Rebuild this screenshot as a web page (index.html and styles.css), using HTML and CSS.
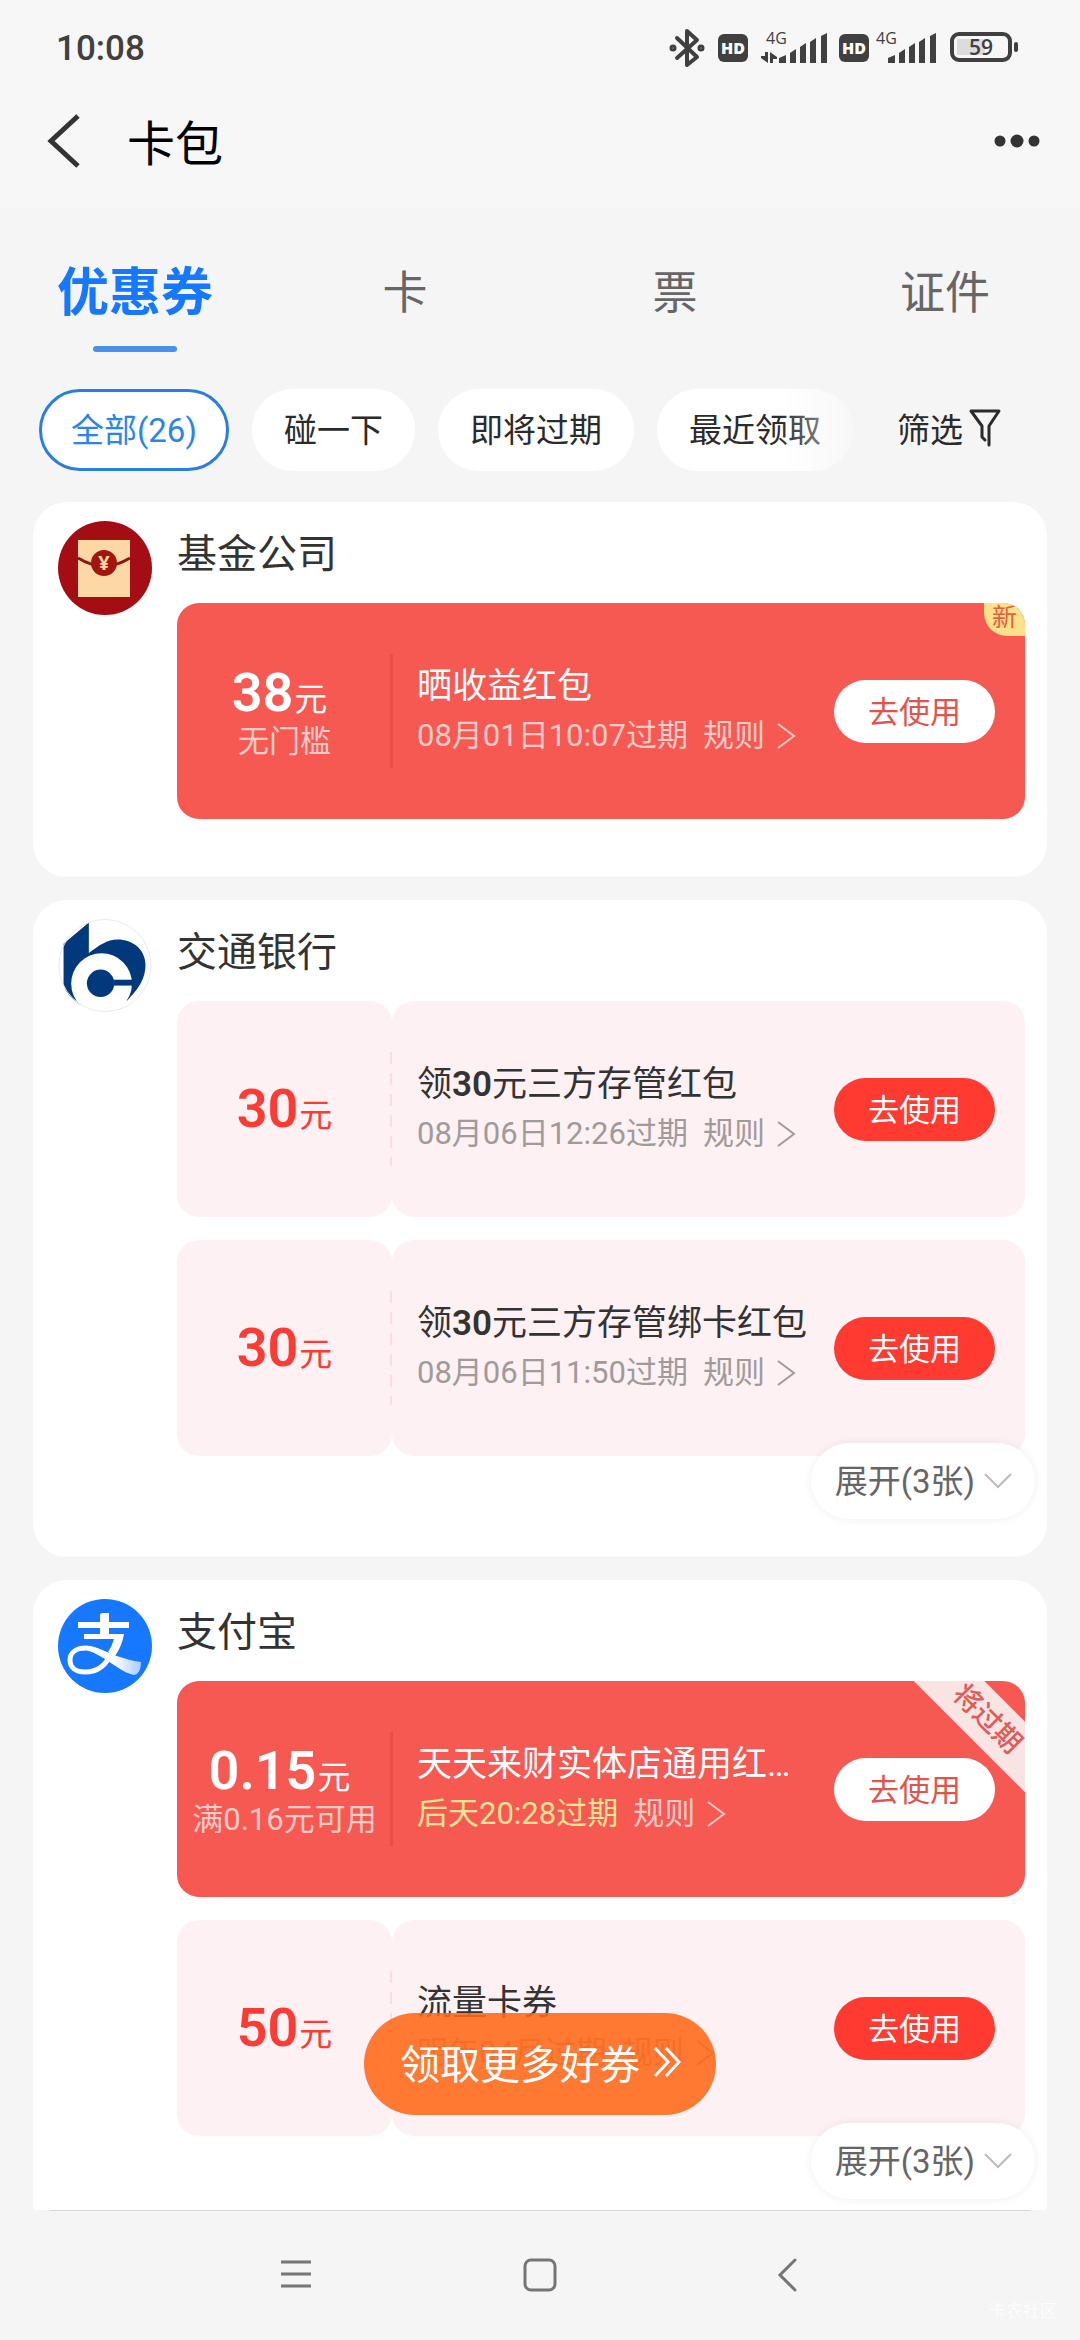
FILE: index.html
```html
<!DOCTYPE html>
<html lang="zh-CN">
<head>
<meta charset="utf-8">
<meta name="viewport" content="width=device-width">
<title>卡包</title>
<link rel="stylesheet" href="styles.css">
</head>
<body>
<svg class="defs" aria-hidden="true">
  <symbol id="signal" viewBox="0 0 48 30">
    <path d="M0 30V25L7 22V30ZM11 30V20L17 16V30ZM21 30V14L27 10V30ZM31 30V9L37 5V30ZM42 30V3L48 0V30Z" fill="#404040"/>
  </symbol>
  <symbol id="chev-right" viewBox="0 0 20 30">
    <path d="M2 3L18 15L2 27" fill="none" stroke="currentColor" stroke-width="2"/>
  </symbol>
  <symbol id="chev-down" viewBox="0 0 30 18">
    <path d="M2 2L15 15L28 2" fill="none" stroke="currentColor" stroke-width="2"/>
  </symbol>
</svg>
<div class="app">
  <header class="header">
    <div class="status">
      <span class="clock">10:08</span>
      <div class="status-icons">
        <svg class="bt" width="36" height="40" viewBox="0 0 36 40" fill="none" stroke="#404040" stroke-width="4" stroke-linejoin="round" stroke-linecap="round">
          <path d="M8 10L28 29L18 37V3L28 12L8 30"/>
          <circle cx="4" cy="20" r="1.500"/><circle cx="32" cy="20" r="1.500"/>
        </svg>
        <span class="hd">HD</span>
        <span class="net net-data"><span class="gen">4G</span>
          <svg class="arrows" width="16" height="11" viewBox="0 0 16 11" fill="#404040"><path d="M4 0H7V11L0 6V4H4ZM9 11V0L16 5V7H12V11Z"/></svg>
          <svg class="bars" width="48" height="30"><use href="#signal"/></svg>
        </span>
        <span class="hd">HD</span>
        <span class="net"><span class="gen">4G</span>
          <svg class="bars" width="48" height="30"><use href="#signal"/></svg>
        </span>
        <span class="battery"><span class="level">59</span></span>
      </div>
    </div>
    <div class="titlebar">
      <button class="icon-btn" aria-label="返回"><svg width="34" height="54" viewBox="0 0 34 54"><path d="M31 2L4 27L31 52" fill="none" stroke="#333" stroke-width="5"/></svg></button>
      <h1>卡包</h1>
      <button class="icon-btn more" aria-label="更多"><svg width="48" height="16" viewBox="0 0 48 16" fill="#333"><circle cx="7" cy="8" r="5.500"/><circle cx="24" cy="8" r="6.500"/><circle cx="41" cy="8" r="5.500"/></svg></button>
    </div>
  </header>

  <nav class="tabs">
    <a href="#coupons" class="tab active">优惠券</a>
    <a href="#cards" class="tab">卡</a>
    <a href="#tickets" class="tab">票</a>
    <a href="#ids" class="tab">证件</a>
  </nav>

  <div class="filters">
    <div class="chips">
      <button class="chip on">全部(26)</button>
      <button class="chip">碰一下</button>
      <button class="chip">即将过期</button>
      <button class="chip">最近领取</button>
    </div>
    <button class="filter-btn">筛选<svg width="34" height="38" viewBox="0 0 34 38" fill="none" stroke="#2b2b2b" stroke-width="3" stroke-linejoin="round" stroke-linecap="round"><path d="M21 36V17L31 2H3L14 17V28L17 31"/></svg></button>
  </div>

  <main class="list">
    <section class="card">
      <svg class="logo" viewBox="0 0 96 96">
        <circle cx="48" cy="48" r="47" fill="#a50d14"/>
        <path d="M21 20H73V77H21Z" fill="#fbd8a6"/>
        <path d="M21 38Q34 46 47 46Q60 46 73 38" fill="none" stroke="#8f1712" stroke-width="3"/>
        <circle cx="47" cy="43" r="13" fill="#a3150f"/>
        <text x="47" y="50" text-anchor="middle" class="yen">¥</text>
      </svg>
      <div class="body">
        <h2>基金公司</h2>
        <div class="coupons">
          <article class="coupon red">
            <div class="stub"><p class="price"><b>38</b>元</p><p class="cond">无门槛</p></div>
            <div class="info">
              <div class="text"><h3>晒收益红包</h3><p class="meta"><span>08月01日10:07过期</span><a href="#rule">规则<svg width="20" height="30"><use href="#chev-right"/></svg></a></p></div>
              <button class="use">去使用</button>
            </div>
            <span class="new">新</span>
          </article>
        </div>
      </div>
    </section>

    <section class="card">
      <svg class="logo" viewBox="0 0 96 98">
        <path d="M31.500 4.700L5.700 26.300V68Q8 79 24 89.700L44 67L70.400 84.700C77 77 89.300 66 89.300 48C89.300 32 76 22 61 22C50 22 42 28 31.500 35.700Z" fill="#02397d"/>
        <circle cx="44.500" cy="67" r="31" fill="#fff"/>
        <circle cx="43.500" cy="66.700" r="14" fill="#02397d"/>
        <path d="M50 63H76V69H50Z" fill="#02397d"/>
        <circle cx="48" cy="48.500" r="47" fill="none" stroke="#eaeaee"/>
      </svg>
      <div class="body">
        <h2>交通银行</h2>
        <div class="coupons">
          <article class="coupon">
            <div class="stub"><p class="price"><b>30</b>元</p></div>
            <div class="info">
              <div class="text"><h3>领<b>30</b>元三方存管红包</h3><p class="meta"><span>08月06日12:26过期</span><a href="#rule">规则<svg width="20" height="30"><use href="#chev-right"/></svg></a></p></div>
              <button class="use">去使用</button>
            </div>
          </article>
          <article class="coupon">
            <div class="stub"><p class="price"><b>30</b>元</p></div>
            <div class="info">
              <div class="text"><h3>领<b>30</b>元三方存管绑卡红包</h3><p class="meta"><span>08月06日11:50过期</span><a href="#rule">规则<svg width="20" height="30"><use href="#chev-right"/></svg></a></p></div>
              <button class="use">去使用</button>
            </div>
          </article>
        </div>
        <button class="expand">展开(3张)<svg width="30" height="18"><use href="#chev-down"/></svg></button>
      </div>
    </section>

    <section class="card">
      <svg class="logo" viewBox="0 0 96 96">
        <defs><linearGradient id="tail" x1="0.500" x2="1"><stop offset="0" stop-color="#fff"/><stop offset="1" stop-color="#a9cbff"/></linearGradient></defs>
        <circle cx="48" cy="48" r="47" fill="#1678ff"/>
        <path d="M43 17Q43 15 46 15H52V24H72V30H52V36H67Q65 48 58 58L51 54Q55 48 57 41H27V36H43V30H21V24H43Z" fill="#fff"/>
        <path d="M55 54C50 66 41 74 28 74C18 74 13 69 13 62C13 54 20 50 29 50C36 50 44 54 52 58" fill="none" stroke="#fff" stroke-width="5"/>
        <path d="M30 48C42 48 56 60 84 64Q84 76 77 77C62 74 50 59 30 52Z" fill="url(#tail)"/>
      </svg>
      <div class="body">
        <h2>支付宝</h2>
        <div class="coupons">
          <article class="coupon red">
            <div class="stub"><p class="price"><b>0.15</b>元</p><p class="cond">满0.16元可用</p></div>
            <div class="info">
              <div class="text"><h3>天天来财实体店通用红…</h3><p class="meta"><span class="soon">后天20:28过期</span><a href="#rule">规则<svg width="20" height="30"><use href="#chev-right"/></svg></a></p></div>
              <button class="use">去使用</button>
            </div>
            <span class="ribbon">将过期</span>
          </article>
          <article class="coupon">
            <div class="stub"><p class="price"><b>50</b>元</p></div>
            <div class="info">
              <div class="text"><h3>流量卡券</h3><p class="meta"><span>明年04月过期</span><a href="#rule">规则<svg width="20" height="30"><use href="#chev-right"/></svg></a></p></div>
              <button class="use">去使用</button>
            </div>
          </article>
        </div>
        <button class="expand">展开(3张)<svg width="30" height="18"><use href="#chev-down"/></svg></button>
      </div>
    </section>
  </main>

  <footer class="sysnav">
    <button class="fab">领取更多好券<svg width="30" height="32" viewBox="0 0 30 32" fill="none" stroke="#fff" stroke-width="3"><path d="M3 2L16 16L3 30M14 2L27 16L14 30"/></svg></button>
    <button class="icon-btn" aria-label="最近任务"><svg width="34" height="34" viewBox="0 0 34 34" stroke="#757575" stroke-width="3"><path d="M2 4H32M2 16H32M2 28H32"/></svg></button>
    <button class="icon-btn" aria-label="主屏幕"><svg width="34" height="34" viewBox="0 0 34 34" fill="none" stroke="#757575" stroke-width="3"><rect x="2" y="2" width="30" height="30" rx="6"/></svg></button>
    <button class="icon-btn" aria-label="返回"><svg width="34" height="34" viewBox="0 0 34 34" fill="none" stroke="#757575" stroke-width="3" stroke-linecap="round"><path d="M28 2L13 17L28 32"/></svg></button>
    <span class="mark">卡农社区</span>
  </footer>
</div>
</body>
</html>
```
FILE: styles.css
```css
* { box-sizing: border-box; margin: 0; padding: 0; }
body { background: #f5f5f5; color: #333; font-family: Roboto, "Noto Sans CJK SC", sans-serif; }
button { border: 0; background: none; font: inherit; color: inherit; white-space: nowrap; }
a { color: inherit; text-decoration: none; }
h1, h2, h3 { font-weight: 400; }
svg { display: block; flex: none; }
.defs { position: absolute; width: 0; height: 0; }
.app { display: flex; flex-direction: column; height: 100vh; overflow: hidden; }

.header { flex: none; background: #f7f7f7; padding-bottom: 18px; }
.status { display: flex; justify-content: space-between; align-items: center; height: 96px; padding: 0 68px 0 56px; }
.clock { font-size: 35px; font-weight: 500; color: #404040; }
.status-icons { display: flex; align-items: center; color: #404040; }
.bt { margin-right: 13px; }
.hd { width: 30px; height: 28px; border-radius: 6px; background: #404040; color: #fff; font: 800 16px/28px "Open Sans", sans-serif; text-align: center; }
.net { position: relative; display: flex; justify-content: flex-end; width: 60px; margin: 0 14px 0 7px; }
.net-data { width: 66px; margin: 0 12px 0 13px; }
.gen { position: absolute; left: 0; top: -3px; font: 500 16px/16px "Open Sans", sans-serif; }
.net-data .gen { left: 5px; }
.arrows { position: absolute; left: 0; bottom: 0; }
.battery { position: relative; width: 62px; height: 30px; margin-bottom: 2px; border: 4px solid #404040; border-radius: 9px; padding: 3px; }
.battery::after { content: ""; position: absolute; right: -10px; top: 6px; width: 4px; height: 10px; border-radius: 2px; background: #404040; }
.level { display: block; height: 16px; font: 600 21px/16px "Open Sans", sans-serif; text-align: center; background: linear-gradient(90deg, #dcdcdc 59%, transparent 59%); }
.titlebar { display: flex; align-items: center; height: 94px; padding: 0 39px 0 47px; }
.titlebar .icon-btn { margin-bottom: 4px; }
.icon-btn { display: flex; }
h1 { font-size: 48px; line-height: 60px; padding-top: 4px; color: #000; margin-left: 46px; flex: 1; }

.tabs { flex: none; display: grid; grid-template-columns: repeat(4, 1fr); padding-top: 46px; }
.tab { display: flex; flex-direction: column; align-items: center; height: 98px; font-size: 45px; line-height: 80px; color: #666; }
.tab.active { font-size: 52px; font-weight: 700; color: #1677ff; }
.tab.active::after { content: ""; width: 84px; height: 6px; margin-top: 12px; border-radius: 3px; background: #4a90e8; }

.filters { flex: none; display: flex; padding: 37px 0 31px 39px; color: #2b2b2b; font-size: 33px; }
.chips { position: relative; flex: 1; display: flex; gap: 23px; overflow: hidden; }
.chips::after { content: ""; position: absolute; top: 0; right: 0; bottom: 0; width: 90px; background: linear-gradient(90deg, rgba(245,245,245,0), rgba(245,245,245,.9)); }
.chip { flex: none; height: 82px; padding: 0 29px 4px; border: 3px solid #fff; border-radius: 41px; background: #fff; }
.chip.on { border-color: #2a7de1; color: #2a85e8; }
.filter-btn { flex: none; display: flex; align-items: center; gap: 5px; width: 210px; padding: 0 0 4px 27px; }

.list { flex: 1 1 0; min-height: 0; overflow-y: auto; scrollbar-width: none; display: flex; flex-direction: column; gap: 23px; padding: 0 33px; }
.card { flex: none; display: flex; gap: 24px; padding: 0 22px 0 24px; border-radius: 34px; background: #fff; }
.logo { width: 96px; height: 96px; margin-top: 18px; }
.yen { font: 700 20px "Noto Sans", sans-serif; fill: #fbd8a6; }
.body { flex: 1; min-width: 0; display: flex; flex-direction: column; }
h2 { font-size: 40px; line-height: 97px; padding-top: 4px; }
.coupons { display: flex; flex-direction: column; gap: 23px; }
.coupons:last-child { margin-bottom: 58px; }
.coupon { position: relative; display: flex; height: 216px; }
.stub, .info { background: #fdf1f3; border-radius: 22px; }
.stub { flex: none; width: 215px; display: flex; flex-direction: column; justify-content: center; align-items: center; color: #fa3c34; }
.coupon::before { content: ""; position: absolute; left: 213px; top: 51px; width: 2px; height: 114px; background: repeating-linear-gradient(#fbdcdf 0 12px, transparent 12px 21px); }
.price { padding-top: 6px; font-size: 33px; line-height: 48px; white-space: nowrap; }
.price b { font-size: 54px; font-weight: 600; margin-right: 1px; }
.cond { font-size: 31px; line-height: 36px; white-space: nowrap; }
.info { flex: 1; min-width: 0; display: flex; align-items: center; justify-content: space-between; padding: 0 30px 0 25px; }
.text { padding-bottom: 3px; }
h3 { font-size: 35px; line-height: 52px; white-space: nowrap; }
h3 b { font-weight: 600; }
.meta { display: flex; gap: 15px; font-size: 31px; line-height: 46px; color: #a09a9b; white-space: nowrap; }
.meta a { display: flex; align-items: center; gap: 11px; }
.use { flex: none; width: 161px; height: 63px; padding-bottom: 4px; border-radius: 32px; background: #ff3a30; color: #fff; font-size: 31px; }

.red { background: #f65952; border-radius: 22px; overflow: hidden; }
.red .stub, .red .info { background: none; color: #fff; }
.red::before { width: 3px; background: #ea4d48; }
.red .price { margin-right: 10px; }
.red .cond, .red .meta { color: #fdcbc8; }
.red .meta .soon { color: #fbe394; }
.red .use { background: #fff; color: #e2544b; }
.new { position: absolute; top: 0; right: 0; width: 41px; height: 33px; border-radius: 0 0 0 23px; background: #fce08a; color: #e2603c; font-size: 25px; line-height: 30px; text-align: center; }
.ribbon { position: absolute; top: 13px; right: -44px; width: 164px; height: 50px; transform: rotate(45deg); background: #f9e4e4; color: #dd5c5c; font-size: 28px; font-weight: 500; line-height: 50px; text-align: center; }

.expand { position: relative; align-self: flex-end; display: flex; align-items: center; gap: 8px; height: 76px; margin: -13px -10px 38px 0; padding: 0 22px 4px 24px; border-radius: 38px; background: #fff; box-shadow: 0 0 10px rgba(0,0,0,.07); color: #666; font-size: 33px; }
.expand svg { color: #bbb; margin-top: 4px; }

.sysnav { position: relative; flex: none; display: flex; justify-content: center; align-items: center; gap: 210px; height: 130px; background: #f5f5f5; }
.sysnav::before { content: ""; position: absolute; top: 0; left: 50px; right: 50px; height: 1px; background: #d6d6d6; }
.fab { position: absolute; left: 50%; bottom: 225px; transform: translateX(-50%); display: flex; align-items: center; gap: 12px; height: 102px; padding: 0 34px 4px 36px; border-radius: 51px; background: rgba(255,104,24,.88); color: #fff; font-size: 40px; }
.mark { position: absolute; right: 23px; bottom: 17px; color: #fcfcfc; font-size: 17px; line-height: 24px; }
```
